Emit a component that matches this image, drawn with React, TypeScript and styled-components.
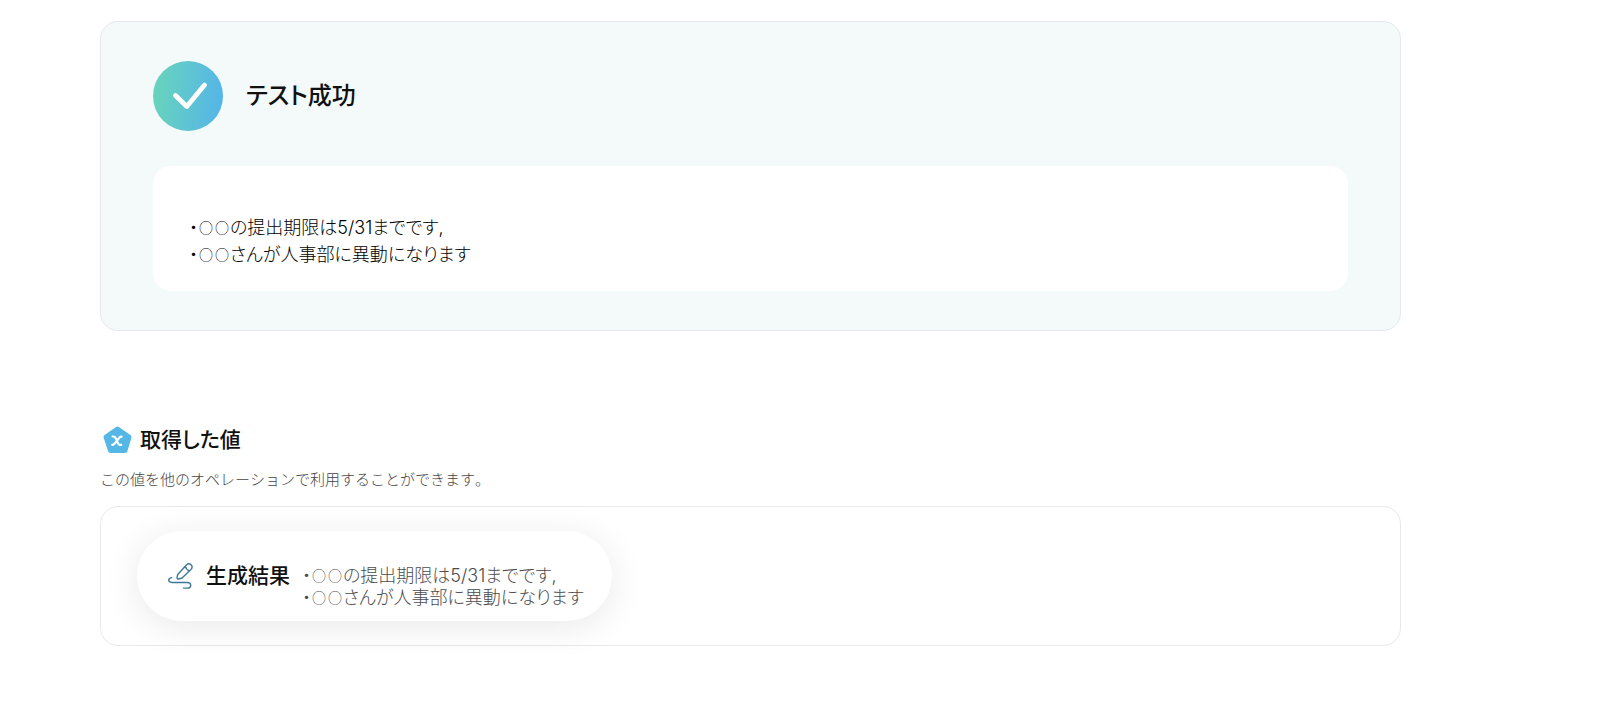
import React from "react";
import styled, { createGlobalStyle } from "styled-components";

const GlobalStyle = createGlobalStyle`
  *, *::before, *::after { box-sizing: border-box; }
  body {
    margin: 0;
    background: #fff;
    color: #111;
    font-family: Inter, "Noto Sans CJK JP", sans-serif;
    font-feature-settings: "palt";
    font-kerning: none;
  }
  h1, h2, h3, p { margin: 0; }
`;

const Page = styled.main`
  padding: 21px 199px 64px 100px;
`;

const ResultPanel = styled.section`
  padding: 39px 52px;
  border: 1px solid #e4e8e9;
  border-radius: 18px;
  background: #f4fafa;
`;

const ResultHeader = styled.header`
  display: flex;
  align-items: center;
  gap: 23px;
  margin-bottom: 35px;
  svg { flex: none; }
`;

const ResultTitle = styled.h1`
  font-size: 24px;
  line-height: 36px;
  font-weight: 500;
`;

const Output = styled.p`
  padding: 48px 36px 23px;
  border-radius: 18px;
  background: #fff;
  color: #000;
  font-size: 18px;
  line-height: 27px;
  font-weight: 300;
`;

const Values = styled.section`
  margin-top: 93px;
`;

const SectionTitle = styled.h2`
  display: flex;
  align-items: center;
  gap: 8px;
  padding-left: 2px;
  font-size: 21px;
  line-height: 32px;
  font-weight: 500;
`;

const Description = styled.p`
  margin: 12px 0 14px;
  color: #444;
  font-size: 15px;
  line-height: 24px;
  font-weight: 300;
  font-feature-settings: normal;
`;

const ValueCard = styled.div`
  display: flex;
  padding: 24px 36px;
  border: 1px solid #e9e9e9;
  border-radius: 18px;
`;

const ValuePill = styled.div`
  display: flex;
  align-items: center;
  padding: 12px 28px 12px 31px;
  border-radius: 46px;
  background: #fff;
  box-shadow: 0 6px 36px rgba(0, 0, 0, 0.09);
`;

const ValueName = styled.h3`
  margin: 0 12px;
  font-size: 21px;
  line-height: 30px;
  font-weight: 500;
`;

const ValueText = styled.p`
  padding-top: 22px;
  color: #4c4c4c;
  font-size: 18px;
  line-height: 22px;
  font-weight: 300;
`;

const Line = styled.span`
  display: block;
`;

const Blank = styled.span`
  padding: 0 1px;
  font-family: "Noto Sans CJK JP", sans-serif;
  font-size: 14px;
  font-feature-settings: normal;
  line-height: 1;
  vertical-align: 1px;
`;

const lines = ["の提出期限は5/31までです,", "さんが人事部に異動になります"];

const GeneratedText = () => (
  <>
    {lines.map((text) => (
      <Line key={text}>
        ・<Blank>○</Blank>
        <Blank>○</Blank>
        {text}
      </Line>
    ))}
  </>
);

const SuccessIcon = () => (
  <svg width="70" height="70" viewBox="0 0 70 70" aria-hidden="true">
    <defs>
      <linearGradient id="success" x1="0" y1="0.45" x2="1" y2="0.55">
        <stop offset="0" stopColor="#69d4bc" />
        <stop offset="1" stopColor="#54b5e8" />
      </linearGradient>
    </defs>
    <circle cx="35" cy="35" r="35" fill="url(#success)" />
    <path d="M22.5 34.5 33.8 45.5 51.5 24" fill="none" stroke="#fff" strokeWidth="4.8" strokeLinecap="round" strokeLinejoin="round" />
  </svg>
);

const VariableIcon = () => (
  <svg width="30" height="30" viewBox="0 0 30 30" aria-hidden="true">
    <path d="M15.5 4 27 12 23 25.5H8.5L4 12Z" fill="#54b7e5" stroke="#54b7e5" strokeWidth="5" strokeLinejoin="round" />
    <path d="M10.6 11.5H11.6Q12.8 11.5 13.4 12.7L16.2 18.6Q16.8 19.9 18 19.9H19.2M19.6 11.6Q18.4 11.3 17.4 12.6L12.4 18.8Q11.4 20 10.2 19.8" fill="none" stroke="#fff" strokeWidth="2.2" strokeLinecap="round" />
  </svg>
);

const PencilIcon = () => (
  <svg width="26" height="28" viewBox="0 0 26 28" fill="none" stroke="#3f7896" strokeWidth="1.4" strokeLinecap="round" strokeLinejoin="round" aria-hidden="true">
    <path d="M9.7 12.4 18.4 3Q20.8.8 23 2.8 25.2 5 23 7.4L14 16 10.6 17Q8.8 17.2 9.1 15.3ZM17.2 4.4Q18.2 7.8 21.6 8.8" />
    <path d="M3.6 15.6Q.7 16.2.7 18.1.7 20.4 4 20.5h15.3q3.4 0 3.4 2.9 0 2.7-3.4 2.7h-3.8" />
  </svg>
);

export default function App() {
  return (
    <>
      <GlobalStyle />
      <Page lang="ja">
        <ResultPanel>
          <ResultHeader>
            <SuccessIcon />
            <ResultTitle>テスト成功</ResultTitle>
          </ResultHeader>
          <Output><GeneratedText /></Output>
        </ResultPanel>
        <Values>
          <SectionTitle>
            <VariableIcon />
            取得した値
          </SectionTitle>
          <Description>この値を他のオペレーションで利用することができます。</Description>
          <ValueCard>
            <ValuePill>
              <PencilIcon />
              <ValueName>生成結果</ValueName>
              <ValueText><GeneratedText /></ValueText>
            </ValuePill>
          </ValueCard>
        </Values>
      </Page>
    </>
  );
}
